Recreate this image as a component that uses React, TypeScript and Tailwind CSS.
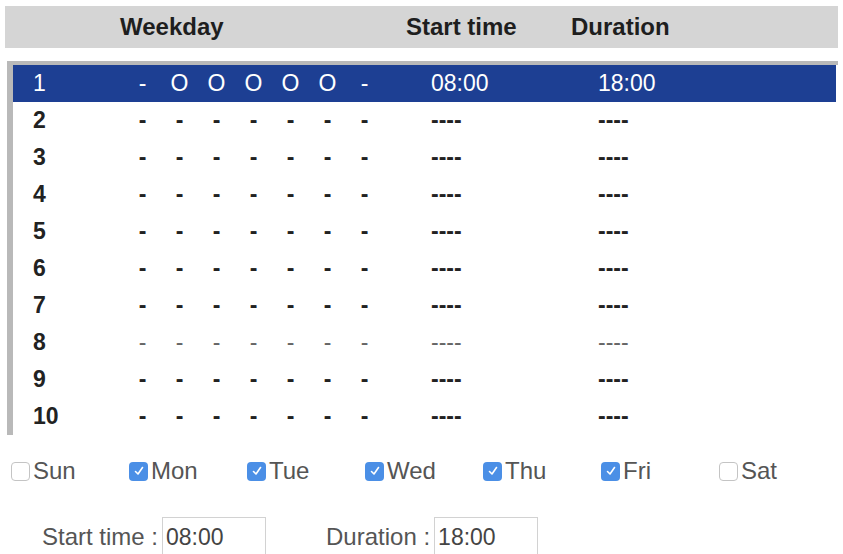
import React from "react";

type Row = {
  id: number;
  days: string[];
  start: string;
  duration: string;
};

const rows: Row[] = [
  { id: 1, days: ["-", "O", "O", "O", "O", "O", "-"], start: "08:00", duration: "18:00" },
  ...Array.from({ length: 9 }, (_, i) => ({
    id: i + 2,
    days: ["-", "-", "-", "-", "-", "-", "-"],
    start: "----",
    duration: "----",
  })),
];

const weekdays = [
  { label: "Sun", checked: false },
  { label: "Mon", checked: true },
  { label: "Tue", checked: true },
  { label: "Wed", checked: true },
  { label: "Thu", checked: true },
  { label: "Fri", checked: true },
  { label: "Sat", checked: false },
];

function Checkbox({ checked }: { checked: boolean }) {
  if (!checked) {
    return <span className="w-[19px] h-[19px] rounded-[4px] border border-[#c4c4c4] bg-white shrink-0" />;
  }
  return (
    <span className="w-[19px] h-[19px] rounded-[4px] bg-[#4b8fe6] shrink-0 flex items-center justify-center">
      <svg width="12" height="12" viewBox="0 0 12 12" fill="none">
        <path d="M2.5 6.5 L5 9 L9.5 2.5" stroke="white" strokeWidth="1.6" strokeLinecap="round" strokeLinejoin="round" />
      </svg>
    </span>
  );
}

function ScheduleRow({ row }: { row: Row }) {
  const selected = row.id === 1;
  const faint = row.id === 8;
  return (
    <div
      className={
        "h-[37px] mr-[2px] flex items-center text-[23px] " +
        (selected ? "bg-[#1d3f93] text-white" : "text-[#222]")
      }
    >
      <div className={"w-[111px] pl-[20px] " + (selected ? "font-normal" : "font-bold")}>{row.id}</div>
      {row.days.map((d, i) => (
        <div
          key={i}
          className={
            "w-[37px] text-center " +
            (selected ? "font-normal" : faint ? "font-normal text-[#666]" : "font-bold")
          }
        >
          {d}
        </div>
      ))}
      <div className={"ml-[48px] w-[167px] " + (selected ? "" : faint ? "text-[#666]" : "font-bold")}>
        {row.start}
      </div>
      <div className={selected ? "" : faint ? "text-[#666]" : "font-bold"}>{row.duration}</div>
    </div>
  );
}

export default function App() {
  return (
    <div className="w-[843px] h-[554px] bg-white overflow-hidden font-['Liberation_Sans',Arial,sans-serif]">
      <div className="mx-[5px] mt-[6px] h-[42px] bg-[#d5d5d5] flex items-center text-[24px] font-bold text-[#1e1e1e]">
        <div className="pl-[115px] w-[401px]">Weekday</div>
        <div className="w-[165px]">Start time</div>
        <div>Duration</div>
      </div>

      <div className="mt-[13px] ml-[7px] w-[831px] border-t-[4px] border-l-[6px] border-[#b9b9b9]">
        {rows.map((r) => (
          <ScheduleRow key={r.id} row={r} />
        ))}
      </div>

      <div className="mt-[21px] h-[30px] pl-[11px] flex items-center text-[24px] text-[#555]">
        {weekdays.map((w) => (
          <div key={w.label} className="w-[118px] flex items-center gap-[3px]">
            <Checkbox checked={w.checked} />
            <span>{w.label}</span>
          </div>
        ))}
      </div>

      <div className="mt-[31px] pl-[42px] flex items-center text-[24px] text-[#555]">
        <span>Start time :</span>
        <input
          readOnly
          value="08:00"
          className="ml-[4px] w-[104px] h-[40px] border border-[#d2d2d2] pl-[3px] text-[23px] text-[#444] outline-none font-['Liberation_Sans',Arial,sans-serif]"
        />
        <span className="ml-[60px]">Duration :</span>
        <input
          readOnly
          value="18:00"
          className="ml-[4px] w-[104px] h-[40px] border border-[#d2d2d2] pl-[3px] text-[23px] text-[#444] outline-none font-['Liberation_Sans',Arial,sans-serif]"
        />
      </div>
    </div>
  );
}
